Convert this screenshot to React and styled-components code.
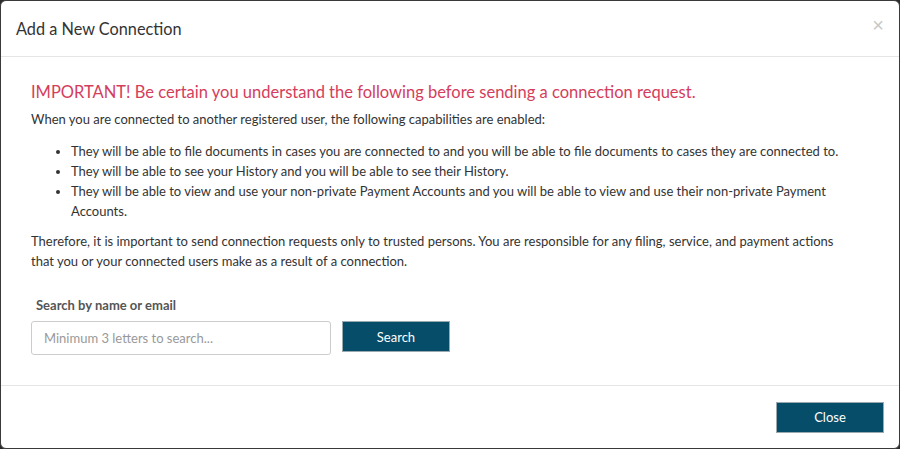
import React, { useState } from "react";
import styled, { createGlobalStyle } from "styled-components";

const GlobalStyle = createGlobalStyle`
  html, body {
    margin: 0;
    padding: 0;
    background: #2b2b2b;
  }
  body {
    font-family: Lato, "Liberation Sans", sans-serif;
    color: #333;
  }
  * { box-sizing: border-box; }
`;

const Modal = styled.div`
  width: 900px;
  height: 449px;
  background: #fff;
  border: 1px solid #3a3a3a;
  border-radius: 6px;
  display: flex;
  flex-direction: column;
  overflow: hidden;
`;

const Header = styled.div`
  height: 56px;
  display: flex;
  align-items: center;
  justify-content: space-between;
  padding: 0 15px 0 15px;
  border-bottom: 1px solid #e5e5e5;
`;

const Title = styled.h4`
  margin: 0;
  font-size: 16.3px;
  font-weight: 400;
  color: #333;
`;

const CloseX = styled.button`
  border: none;
  background: none;
  padding: 0;
  margin-top: -8px;
  font-size: 20px;
  line-height: 1;
  color: #c8c8c8;
  cursor: pointer;
  font-family: "Liberation Sans", sans-serif;
`;

const Body = styled.div`
  flex: 1;
  padding: 23px 50px 0 30px;
  font-size: 13px;
  line-height: 20px;
`;

const Warning = styled.h3`
  margin: 0 0 5px;
  font-size: 16.5px;
  font-weight: 400;
  line-height: 24px;
  color: #d43d5c;
`;

const Text = styled.p`
  margin: 0 0 ${(p) => p.$gap || 10}px;
`;

const List = styled.ul`
  margin: 0 0 10px;
  padding-left: 40px;
`;

const Label = styled.label`
  display: block;
  margin: 24px 0 6px 5px;
  font-weight: 700;
  color: #555;
`;

const SearchRow = styled.div`
  display: flex;
  align-items: flex-start;
  gap: 11px;
`;

const Input = styled.input`
  width: 300px;
  height: 34px;
  padding: 6px 12px;
  border: 1px solid #ccc;
  border-radius: 3px;
  font-family: inherit;
  font-size: 13px;
  color: #333;
  &::placeholder { color: #999; }
`;

const Button = styled.button`
  width: 108px;
  height: 31px;
  background: #064d6a;
  color: #fff;
  border: 1px solid #9aa8b0;
  font-family: inherit;
  font-size: 13px;
  cursor: pointer;
`;

const Footer = styled.div`
  height: 63px;
  border-top: 1px solid #e5e5e5;
  display: flex;
  justify-content: flex-end;
  align-items: center;
  padding: 0 15px 0 0;
`;

export default function App() {
  const [query, setQuery] = useState("");

  return (
    <>
      <GlobalStyle />
      <Modal>
        <Header>
          <Title>Add a New Connection</Title>
          <CloseX aria-label="Close">×</CloseX>
        </Header>
        <Body>
          <Warning>
            IMPORTANT! Be certain you understand the following before sending a connection request.
          </Warning>
          <Text $gap={12}>
            When you are connected to another registered user, the following capabilities are enabled:
          </Text>
          <List>
            <li>
              They will be able to file documents in cases you are connected to and you will be able to file documents to cases they are connected to.
            </li>
            <li>
              They will be able to see your History and you will be able to see their History.
            </li>
            <li>
              They will be able to view and use your non-private Payment Accounts and you will be able to view and use their non-private Payment Accounts.
            </li>
          </List>
          <Text>
            Therefore, it is important to send connection requests only to trusted persons. You are responsible for any filing, service, and payment actions that you or your connected users make as a result of a connection.
          </Text>
          <Label htmlFor="search">Search by name or email</Label>
          <SearchRow>
            <Input
              id="search"
              placeholder="Minimum 3 letters to search..."
              value={query}
              onChange={(e) => setQuery(e.target.value)}
            />
            <Button>Search</Button>
          </SearchRow>
        </Body>
        <Footer>
          <Button>Close</Button>
        </Footer>
      </Modal>
    </>
  );
}
